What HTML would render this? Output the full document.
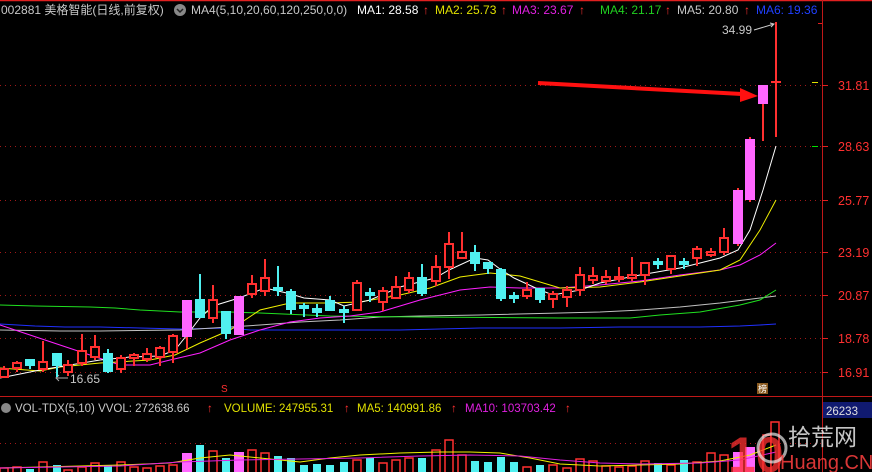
<!DOCTYPE html>
<html><head><meta charset="utf-8"><style>
html,body{margin:0;padding:0;background:#000;width:872px;height:472px;overflow:hidden}
svg{display:block}
text{font-family:"Liberation Sans","Noto Sans CJK SC",sans-serif}
</style></head><body>
<svg width="872" height="472" viewBox="0 0 872 472" xmlns="http://www.w3.org/2000/svg">
<rect width="872" height="472" fill="#000"/>
<line x1="0" y1="0.5" x2="872" y2="0.5" stroke="#e02020" stroke-width="1.5"/>
<line x1="822.5" y1="0" x2="822.5" y2="472" stroke="#c01818"/>
<line x1="0" y1="396.5" x2="872" y2="396.5" stroke="#c01818"/>
<g stroke="#a01818" stroke-dasharray="1,4">
<line x1="0" y1="85.5" x2="822" y2="85.5"/><line x1="0" y1="146.5" x2="822" y2="146.5"/>
<line x1="0" y1="200.5" x2="822" y2="200.5"/><line x1="0" y1="252.5" x2="822" y2="252.5"/>
<line x1="0" y1="295.5" x2="822" y2="295.5"/><line x1="0" y1="338.5" x2="822" y2="338.5"/>
<line x1="0" y1="372.5" x2="822" y2="372.5"/><line x1="0" y1="443.5" x2="822" y2="443.5"/>
</g>
<g stroke="#e02020"><line x1="822" y1="85.5" x2="828" y2="85.5"/><line x1="822" y1="146.5" x2="828" y2="146.5"/><line x1="822" y1="200.5" x2="828" y2="200.5"/><line x1="822" y1="252.5" x2="828" y2="252.5"/><line x1="822" y1="295.5" x2="828" y2="295.5"/><line x1="822" y1="338.5" x2="828" y2="338.5"/><line x1="822" y1="372.5" x2="828" y2="372.5"/><line x1="818" y1="23.5" x2="822" y2="23.5"/></g>
<line x1="812" y1="82.5" x2="818" y2="82.5" stroke="#e0e000"/>
<line x1="812" y1="146.5" x2="818" y2="146.5" stroke="#00e000"/>
<g fill="#ff3030" font-size="12.5">
<text x="838" y="90">31.81</text><text x="838" y="151">28.63</text><text x="838" y="205">25.77</text><text x="838" y="257">23.19</text><text x="838" y="300">20.87</text><text x="838" y="343">18.78</text><text x="838" y="377">16.91</text>
</g>
<!-- header -->
<g font-size="12">
<text x="1" y="14" fill="#c8c8c8">002881 美格智能(日线,前复权)</text>
<circle cx="180" cy="10" r="6" fill="#888"/><path d="M177 9l3 3 3-3" stroke="#222" stroke-width="1.5" fill="none"/>
<text x="191" y="14" fill="#c8c8c8">MA4(5,10,20,60,120,250,0,0)</text>
<text x="357" y="14" fill="#ffffff">MA1: 28.58</text><text x="423" y="14" fill="#ff3030">↑</text>
<text x="435" y="14" fill="#e0e000">MA2: 25.73</text><text x="501" y="14" fill="#ff3030">↑</text>
<text x="512" y="14" fill="#e020e0">MA3: 23.67</text><text x="579" y="14" fill="#ff3030">↑</text>
<text x="600" y="14" fill="#20d020">MA4: 21.17</text><text x="665" y="14" fill="#ff3030">↑</text>
<text x="677" y="14" fill="#c8c8c8">MA5: 20.80</text><text x="744" y="14" fill="#ff3030">↑</text>
<text x="756" y="14" fill="#2040ff">MA6: 19.36</text>
</g>
<text x="722" y="34" fill="#c8c8c8" font-size="12">34.99</text>
<path d="M754 30l20-6m-4-1l4 1-3 3" stroke="#ccc" fill="none"/>
<text x="70" y="383" fill="#c8c8c8" font-size="12">16.65</text>
<path d="M68 378h-12m3-3l-3 3 3 3" stroke="#aaa" fill="none"/>
<text x="221" y="392" fill="#ff3030" font-size="10">S</text>
<rect x="757" y="383" width="11" height="11" fill="#8a5a20"/><text x="758" y="392" fill="#fff" font-size="9">榜</text>
<!-- MAs -->
<g fill="none" stroke-width="1">
<polyline stroke="#2030ff" points="0,324 35,326 65,327 100,327 140,328 180,329 230,328 250,330 320,330 400,330 440,329 480,328 560,328 620,327 700,327 740,326 760,325 776,324"/>
<polyline stroke="#c0c0c0" points="0,330 60,331 100,331 180,330 230,327 260,325 300,322 340,320 380,317 420,316 480,315 560,313 600,312 640,310 680,307 720,303 760,298 776,296"/>
<polyline stroke="#20e020" points="0,305 35,306 90,307 115,308 140,310 180,312 230,312 260,313 330,316 420,317 560,318 630,318 660,315 700,312 740,305 760,300 776,290"/>
<polyline stroke="#ff20ff" points="0,325 30,335 60,345 90,355 120,365 150,365 170,360 200,353 230,340 260,330 290,322 320,318 350,316 380,312 420,300 460,290 490,287 520,288 560,288 600,285 640,281 680,275 720,270 740,265 760,255 776,243"/>
<polyline stroke="#f0f000" points="0,368 40,371 60,367 100,363 150,360 175,355 200,343 230,330 260,310 290,303 330,303 360,302 400,295 430,288 460,277 490,273 520,276 560,288 600,287 640,282 680,276 720,270 740,260 760,230 776,200"/>
<polyline stroke="#ffffff" points="0,378 40,370 70,365 100,360 130,357 160,356 175,350 187,335 200,318 213,306 239,298 265,288 291,294 304,298 330,300 344,306 370,300 400,287 435,278 449,270 475,258 488,260 500,269 514,278 540,290 553,295 580,290 600,283 640,275 680,268 720,258 738,250 750,230 763,190 776,146"/>
</g>
<!-- candles: red hollow -->
<g stroke="#ff3030" stroke-width="2" fill="#000">
<line x1="4" y1="366" x2="4" y2="378"/><rect x="0" y="369" width="8" height="8"/>
<line x1="17" y1="361" x2="17" y2="372"/><rect x="13" y="363" width="8" height="5"/>
<line x1="43" y1="341" x2="43" y2="372"/><rect x="39" y="362" width="8" height="7"/>
<line x1="68" y1="360" x2="68" y2="376"/><rect x="64" y="365" width="8" height="7"/>
<line x1="82" y1="334" x2="82" y2="366"/><rect x="78" y="351" width="8" height="12"/>
<line x1="95" y1="335" x2="95" y2="360"/><rect x="91" y="347" width="8" height="10"/>
<line x1="121" y1="355" x2="121" y2="373"/><rect x="117" y="358" width="8" height="11"/>
<line x1="134" y1="353" x2="134" y2="366"/><rect x="130" y="355" width="8" height="3"/>
<line x1="147" y1="348" x2="147" y2="362"/><rect x="143" y="354" width="8" height="5"/>
<line x1="160" y1="346" x2="160" y2="366"/><rect x="156" y="348" width="8" height="9"/>
<line x1="173" y1="334" x2="173" y2="363"/><rect x="169" y="336" width="8" height="16"/>
<line x1="213" y1="285" x2="213" y2="323"/><rect x="209" y="300" width="8" height="18"/>
<line x1="252" y1="275" x2="252" y2="298"/><rect x="248" y="284" width="8" height="10"/>
<line x1="265" y1="259" x2="265" y2="296"/><rect x="261" y="278" width="8" height="13"/>
<line x1="357" y1="280" x2="357" y2="311"/><rect x="353" y="283" width="8" height="27"/>
<line x1="383" y1="287" x2="383" y2="311"/><rect x="379" y="291" width="8" height="11"/>
<line x1="396" y1="276" x2="396" y2="299"/><rect x="392" y="287" width="8" height="11"/>
<line x1="409" y1="272" x2="409" y2="293"/><rect x="405" y="278" width="8" height="12"/>
<line x1="436" y1="255" x2="436" y2="286"/><rect x="432" y="267" width="8" height="14"/>
<line x1="449" y1="232" x2="449" y2="279"/><rect x="445" y="244" width="8" height="23"/>
<line x1="462" y1="232" x2="462" y2="258"/><rect x="458" y="252" width="8" height="6"/>
<line x1="527" y1="282" x2="527" y2="299"/><rect x="523" y="290" width="8" height="6"/>
<line x1="553" y1="291" x2="553" y2="308"/><rect x="549" y="294" width="8" height="5"/>
<line x1="567" y1="286" x2="567" y2="307"/><rect x="563" y="290" width="8" height="7"/>
<line x1="580" y1="267" x2="580" y2="296"/><rect x="576" y="275" width="8" height="15"/>
<line x1="593" y1="267" x2="593" y2="284"/><rect x="589" y="276" width="8" height="4"/>
<line x1="606" y1="270" x2="606" y2="284"/><rect x="602" y="277" width="8" height="4"/>
<line x1="619" y1="267" x2="619" y2="282"/><rect x="615" y="277" width="8" height="2"/>
<line x1="632" y1="257" x2="632" y2="281"/><rect x="628" y="275" width="8" height="3"/>
<line x1="645" y1="262" x2="645" y2="285"/><rect x="641" y="263" width="8" height="12"/>
<line x1="671" y1="255" x2="671" y2="274"/><rect x="667" y="256" width="8" height="13"/>
<line x1="697" y1="246" x2="697" y2="266"/><rect x="693" y="249" width="8" height="9"/>
<line x1="711" y1="248" x2="711" y2="257"/><rect x="707" y="252" width="8" height="3"/>
<line x1="724" y1="228" x2="724" y2="255"/><rect x="720" y="238" width="8" height="14"/>
<line x1="763" y1="104" x2="763" y2="141"/>
<line x1="776" y1="22" x2="776" y2="137"/><line x1="771" y1="82" x2="781" y2="82"/>
</g>
<!-- cyan -->
<g stroke="#50f0f0" stroke-width="2" fill="#50f0f0">
<line x1="30" y1="360" x2="30" y2="369"/><rect x="26" y="360" width="8" height="5"/>
<line x1="57" y1="354" x2="57" y2="377"/><rect x="53" y="354" width="8" height="11"/>
<line x1="108" y1="349" x2="108" y2="373"/><rect x="104" y="354" width="8" height="17"/>
<line x1="200" y1="274" x2="200" y2="318"/><rect x="196" y="300" width="8" height="17"/>
<line x1="226" y1="312" x2="226" y2="339"/><rect x="222" y="312" width="8" height="21"/>
<line x1="278" y1="266" x2="278" y2="296"/><rect x="274" y="288" width="8" height="2"/>
<line x1="291" y1="289" x2="291" y2="314"/><rect x="287" y="292" width="8" height="17"/>
<line x1="304" y1="303" x2="304" y2="317"/><rect x="300" y="306" width="8" height="2"/>
<line x1="317" y1="304" x2="317" y2="317"/><rect x="313" y="309" width="8" height="3"/>
<line x1="330" y1="296" x2="330" y2="311"/><rect x="326" y="301" width="8" height="9"/>
<line x1="344" y1="306" x2="344" y2="323"/><rect x="340" y="310" width="8" height="2"/>
<line x1="370" y1="288" x2="370" y2="302"/><rect x="366" y="293" width="8" height="2"/>
<line x1="422" y1="264" x2="422" y2="296"/><rect x="418" y="278" width="8" height="15"/>
<line x1="475" y1="245" x2="475" y2="271"/><rect x="471" y="253" width="8" height="10"/>
<line x1="488" y1="263" x2="488" y2="274"/><rect x="484" y="263" width="8" height="5"/>
<line x1="501" y1="268" x2="501" y2="301"/><rect x="497" y="270" width="8" height="28"/>
<line x1="514" y1="292" x2="514" y2="303"/><rect x="510" y="296" width="8" height="2"/>
<line x1="540" y1="289" x2="540" y2="303"/><rect x="536" y="289" width="8" height="10"/>
<line x1="658" y1="258" x2="658" y2="269"/><rect x="654" y="262" width="8" height="2"/>
<line x1="684" y1="258" x2="684" y2="269"/><rect x="680" y="262" width="8" height="2"/>
</g>
<!-- magenta -->
<g fill="#ff66ff">
<line x1="187" y1="337" x2="187" y2="349" stroke="#ff3030" stroke-width="2"/>
<rect x="182" y="300" width="10" height="37"/>
<rect x="234" y="296" width="10" height="39"/>
<line x1="738" y1="188" x2="738" y2="246" stroke="#ff3030" stroke-width="2"/>
<rect x="733" y="190" width="10" height="54"/>
<line x1="750" y1="137" x2="750" y2="202" stroke="#ff3030" stroke-width="2"/>
<rect x="745" y="139" width="10" height="61"/>
<rect x="758" y="85" width="10" height="19"/>
</g>
<!-- arrow -->
<path d="M538 83L742 94" stroke="#ff1010" stroke-width="4"/>
<path d="M740 88L758 96L740 102Z" fill="#ff1010"/>
<!-- volume header -->
<g font-size="11.5">
<circle cx="6" cy="408" r="5" fill="#888"/>
<text x="15" y="412" fill="#c8c8c8">VOL-TDX(5,10) VVOL: 272638.66</text><text x="207" y="412" fill="#ff3030">↑</text>
<text x="224" y="412" fill="#e0e000">VOLUME: 247955.31</text><text x="344" y="412" fill="#ff3030">↑</text>
<text x="357" y="412" fill="#e0e000">MA5: 140991.86</text><text x="451" y="412" fill="#ff3030">↑</text>
<text x="465" y="412" fill="#e020e0">MA10: 103703.42</text><text x="565" y="412" fill="#ff3030">↑</text>
</g>
<rect x="823" y="402" width="49" height="16" fill="#101a70"/>
<text x="826" y="415" fill="#e0e0e0" font-size="11.5">26233</text>
<!-- volume bars -->
<g stroke="#ff3030" stroke-width="1.5" fill="#000">
<rect x="0" y="468" width="8" height="6"/><rect x="13" y="467" width="8" height="7"/><rect x="39" y="462" width="8" height="12"/><rect x="64" y="470" width="8" height="4"/><rect x="78" y="467" width="8" height="7"/><rect x="91" y="463" width="8" height="11"/><rect x="117" y="462" width="8" height="12"/><rect x="130" y="467" width="8" height="7"/><rect x="143" y="468" width="8" height="6"/><rect x="156" y="466" width="8" height="8"/><rect x="169" y="465" width="8" height="9"/><rect x="209" y="451" width="8" height="23"/><rect x="248" y="450" width="8" height="24"/><rect x="261" y="453" width="8" height="21"/><rect x="353" y="460" width="8" height="14"/><rect x="379" y="463" width="8" height="11"/><rect x="392" y="460" width="8" height="14"/><rect x="405" y="458" width="8" height="16"/><rect x="432" y="450" width="8" height="24"/><rect x="445" y="440" width="8" height="34"/><rect x="458" y="455" width="8" height="19"/><rect x="523" y="467" width="8" height="7"/><rect x="549" y="465" width="8" height="9"/><rect x="563" y="468" width="8" height="6"/><rect x="576" y="459" width="8" height="15"/><rect x="589" y="461" width="8" height="13"/><rect x="602" y="466" width="8" height="8"/><rect x="615" y="467" width="8" height="7"/><rect x="628" y="466" width="8" height="8"/><rect x="641" y="461" width="8" height="13"/><rect x="667" y="465" width="8" height="9"/><rect x="693" y="462" width="8" height="12"/><rect x="707" y="453" width="8" height="21"/><rect x="720" y="455" width="8" height="19"/><rect x="763" y="435" width="8" height="39"/><rect x="771" y="422" width="8" height="52"/>
</g>
<g fill="#50f0f0">
<rect x="26" y="469" width="8" height="3"/><rect x="53" y="465" width="8" height="7"/><rect x="104" y="465" width="8" height="7"/><rect x="196" y="445" width="8" height="27"/><rect x="222" y="458" width="8" height="14"/><rect x="274" y="456" width="8" height="16"/><rect x="287" y="458" width="8" height="14"/><rect x="300" y="465" width="8" height="7"/><rect x="313" y="464" width="8" height="8"/><rect x="326" y="465" width="8" height="7"/><rect x="340" y="462" width="8" height="10"/><rect x="366" y="458" width="8" height="14"/><rect x="418" y="458" width="8" height="14"/><rect x="471" y="461" width="8" height="11"/><rect x="484" y="462" width="8" height="10"/><rect x="497" y="457" width="8" height="15"/><rect x="510" y="462" width="8" height="10"/><rect x="536" y="465" width="8" height="7"/><rect x="654" y="463" width="8" height="9"/><rect x="680" y="460" width="8" height="12"/>
</g>
<g fill="#ff66ff"><rect x="182" y="453" width="10" height="19"/><rect x="234" y="452" width="10" height="20"/><rect x="733" y="452" width="10" height="20"/><rect x="745" y="447" width="10" height="25"/></g>
<polyline fill="none" stroke="#f0f000" points="0,468 40,467 80,466 120,465 170,463 200,458 230,455 260,458 300,462 330,458 360,455 400,453 440,452 470,452 500,453 530,458 560,464 600,466 640,465 680,464 720,461 750,455 776,445"/>
<polyline fill="none" stroke="#e020e0" points="0,468 60,467 120,466 180,462 240,460 300,459 360,458 420,456 470,455 520,456 560,460 600,463 640,464 700,463 740,460 776,452"/>
<!-- watermark -->
<text x="728" y="472" fill="#ff3030" fill-opacity="0.75" font-size="50" font-weight="bold">10</text>
<circle cx="772" cy="448" r="14" fill="none" stroke="#e8e8e8" stroke-opacity="0.7" stroke-width="3"/>
<text x="788" y="445" fill="#e8e8e8" fill-opacity="0.85" font-size="23">拾荒网</text>
<text x="780" y="469" fill="#ff4040" fill-opacity="0.85" font-size="20">Huang.CN</text>
</svg>
</body></html>
